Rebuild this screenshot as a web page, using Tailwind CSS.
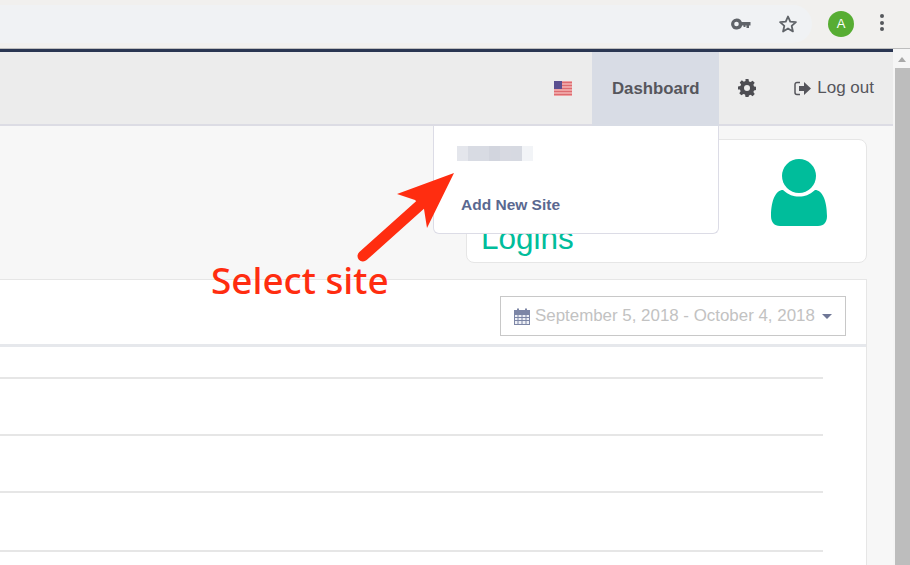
<!DOCTYPE html>
<html lang="en">
<head>
    <meta charset="UTF-8">
    <title>Dashboard</title>
    <script src="https://cdn.jsdelivr.net/npm/@tailwindcss/browser@4"></script>
</head>
<body class="relative w-[910px] h-[565px] overflow-hidden bg-[#f7f7f7] font-['Liberation_Sans',Arial,sans-serif]">
    <!-- browser toolbar -->
    <div class="flex items-center h-[49px] bg-[#f1f0ee] border-b border-[#bdbdbd]">
        <div class="w-[812px] h-[38px] mt-[-1px] bg-[#f0f2f4] rounded-r-full flex items-center justify-end">
            <svg class="w-[20px] h-[12px] mr-[27px]" viewBox="0 0 20 12" fill="#5f6368"><path d="M5.5 0.5a5.5 5.5 0 1 1-5 7.5a5.5 5.5 0 0 1 5-7.500zm0 3.200a2.300 2.300 0 1 0 0 4.600a2.300 2.300 0 0 0 0-4.600z" fill-rule="evenodd"/><path d="M10 4h9.500v3.500h-1.500v2.500h-2.500v-2.500h-1v1.500h-2v-1.500h-2.500z"/></svg>
            <svg class="w-[20px] h-[20px] mr-[14px]" viewBox="0 0 24 24" fill="none" stroke="#5f6368" stroke-width="2.200" stroke-linejoin="round"><path d="M12 3l2.700 6.200 6.800.6-5.100 4.500 1.500 6.600-5.900-3.500-5.900 3.500 1.500-6.600-5.100-4.500 6.800-.6z"/></svg>
        </div>
        <div class="ml-[16px] w-[26px] h-[26px] rounded-full bg-[#57ad33] text-white text-[13px] flex items-center justify-center">A</div>
        <div class="ml-[26px] mt-[-3px] flex flex-col gap-[2.500px]">
            <span class="w-[4px] h-[4px] rounded-full bg-[#55585c]"></span>
            <span class="w-[4px] h-[4px] rounded-full bg-[#55585c]"></span>
            <span class="w-[4px] h-[4px] rounded-full bg-[#55585c]"></span>
        </div>
    </div>

    <div class="flex h-[516px]">
        <div class="w-[893px]">
            <div class="h-[3px] bg-[#2a3652]"></div>
            <!-- top nav -->
            <nav class="h-[74px] bg-[#ececec] border-b-2 border-[#dcdce4] flex items-stretch justify-end text-[#56565c]">
                <div class="flex items-center mr-[20px]">
                    <svg class="w-[18px] h-[15px]" viewBox="0 0 18 15">
                        <rect width="18" height="15" fill="#f3b4b4"/>
                        <path d="M0 1.500h18M0 4.500h18M0 7.500h18M0 10.500h18M0 13.500h18" stroke="#dd6b70" stroke-width="1.300"/>
                        <rect width="8" height="8" fill="#5a4f90"/>
                    </svg>
                </div>
                <a class="w-[127px] h-[74px] bg-[#d8dce5] flex items-center justify-center text-[16.800px] font-bold">Dashboard</a>
                <div class="w-[56px] flex items-center justify-center">
                    <svg class="w-[18px] h-[18px]" viewBox="0 0 24 24" fill="#4d4d52"><path fill-rule="evenodd" d="M10 0h4l.6 3.200 2.200.9L19.500 2.300l2.800 2.800-1.800 2.700.9 2.200 3.200.600v4l-3.200.6-.9 2.200 1.800 2.700-2.800 2.800-2.700-1.800-2.200.9L14 24h-4l-.6-3.200-2.200-.9-2.700 1.800-2.800-2.800 1.800-2.700-.9-2.200L0 14v-4l3.200-.6.900-2.200-1.800-2.700 2.800-2.800 2.700 1.800 2.200-.9zM12 8a4 4 0 1 0 0 8a4 4 0 0 0 0-8z"/></svg>
                </div>
                <div class="flex items-center pl-[19px] pr-[19px] text-[17px]">
                    <svg class="w-[17px] h-[15px] mr-[6px]" viewBox="0 0 17 15" fill="none"><path d="M6 1.500H3a2 2 0 0 0-2 2v8a2 2 0 0 0 2 2h3" stroke="#55555b" stroke-width="1.500"/><path d="M10 1l7 6.500-7 6.500v-4H5V5h5z" fill="#55555b"/></svg>
                    Log out
                </div>
            </nav>

            <!-- content -->
            <div class="pt-[13px] pr-[26px]">
                <div class="relative ml-[466px] h-[124px] bg-white border border-[#e6e6e6] rounded-lg flex items-end">
                    <span class="pl-[14px] pb-[6px] text-[31.500px] leading-[36px] text-[#00bd9b]">Logins</span>
                    <svg class="absolute left-[304px] top-[19px] w-[56px] h-[67px]" viewBox="0 0 56 67" fill="#00bd9b">
                        <circle cx="28" cy="17" r="17"/>
                        <path d="M12 31c6 5 10 6.500 16 6.500S38 36 44 31c7 0 12 10 12 26 0 6-3 10-9 10H9c-6 0-9-4-9-10 0-16 5-26 12-26z"/>
                    </svg>
                </div>
                <!-- chart panel -->
                <div class="mt-[16px] h-[290px] bg-white border-t border-r border-[#e6e6e6]">
                    <div class="h-[67px] border-b-[3px] border-[#e6e8ec] flex justify-end pt-[16px] pr-[20px]">
                        <div class="w-[346px] h-[40px] border border-[#c8c8c8] flex items-center pl-[13px] text-[16.900px] text-[#c2c2c2]">
                            <svg class="w-[16px] h-[17px] mr-[5px]" viewBox="0 0 16 17" fill="none" stroke="#7d86a6"><rect x="0.500" y="2.500" width="15" height="14" fill="#eef0f6"/><path d="M0.500 6.500h15M0.500 9.500h15M0.500 12.500h15M4 6.500v10M8 6.500v10M12 6.500v10" stroke-width="1"/><path d="M4 0.500v4M12 0.500v4" stroke-width="2"/><rect x="0.500" y="2.500" width="15" height="3.500" fill="#7d86a6"/></svg>
                            September 5, 2018 - October 4, 2018
                            <span class="ml-[7px] mt-[1px] w-0 h-0 border-x-[5.500px] border-x-transparent border-t-[5px] border-t-[#6f7796]"></span>
                        </div>
                    </div>
                    <div class="flex flex-col pr-[43px] pt-[30px] gap-[55px]">
                        <div class="h-[2px] bg-[#e6e6e6]"></div>
                        <div class="h-[2px] bg-[#e6e6e6]"></div>
                        <div class="h-[2px] bg-[#e6e6e6]"></div>
                        <div class="h-[2px] mt-[2px] bg-[#e6e6e6]"></div>
                    </div>
                </div>
            </div>
        </div>

        <!-- scrollbar -->
        <div class="w-[17px] bg-[#f5f5f5] flex flex-col">
            <div class="h-[19px] flex items-center justify-center pt-[1px]">
                <span class="w-0 h-0 border-x-[4.500px] border-x-transparent border-b-[5px] border-b-[#a8a8a8]"></span>
            </div>
            <div class="ml-[2px] flex-1 bg-[#bdbdbd]"></div>
        </div>
    </div>

    <!-- site dropdown -->
    <div class="absolute left-[433px] top-[126px] w-[286px] h-[108px] bg-white border border-t-0 border-[#dcdce6] rounded-b-md">
        <div class="absolute left-[23px] top-[20px] w-[76px] h-[15px] flex blur-[0.5px]">
            <span class="w-[11px] bg-[#e4e6ec]"></span>
            <span class="w-[21px] bg-[#d8dbe3]"></span>
            <span class="w-[11px] bg-[#d2d5de]"></span>
            <span class="w-[11px] bg-[#d7d9e1]"></span>
            <span class="w-[11px] bg-[#d6d9e1]"></span>
            <span class="w-[11px] bg-[#f2f4f7]"></span>
        </div>
        <a class="absolute left-[27px] top-[70px] text-[15.500px] leading-[18px] font-bold text-[#5a6890]">Add New Site</a>
    </div>

    <!-- annotation -->
    <svg class="absolute left-[350px] top-[165px] w-[110px] h-[100px]" viewBox="0 0 110 100" fill="#ff2d10">
        <path d="M13 91L70 40" stroke="#ff2d10" stroke-width="11" stroke-linecap="round"/>
        <path d="M104 8L47 29L65 35L74 44L77 63z"/>
    </svg>
    <div class="absolute left-[211px] top-[257px] text-[36.900px] leading-[46px] font-medium text-[#ff2d10] font-['Noto_Sans',sans-serif] whitespace-nowrap">Select site</div>
</body>
</html>
